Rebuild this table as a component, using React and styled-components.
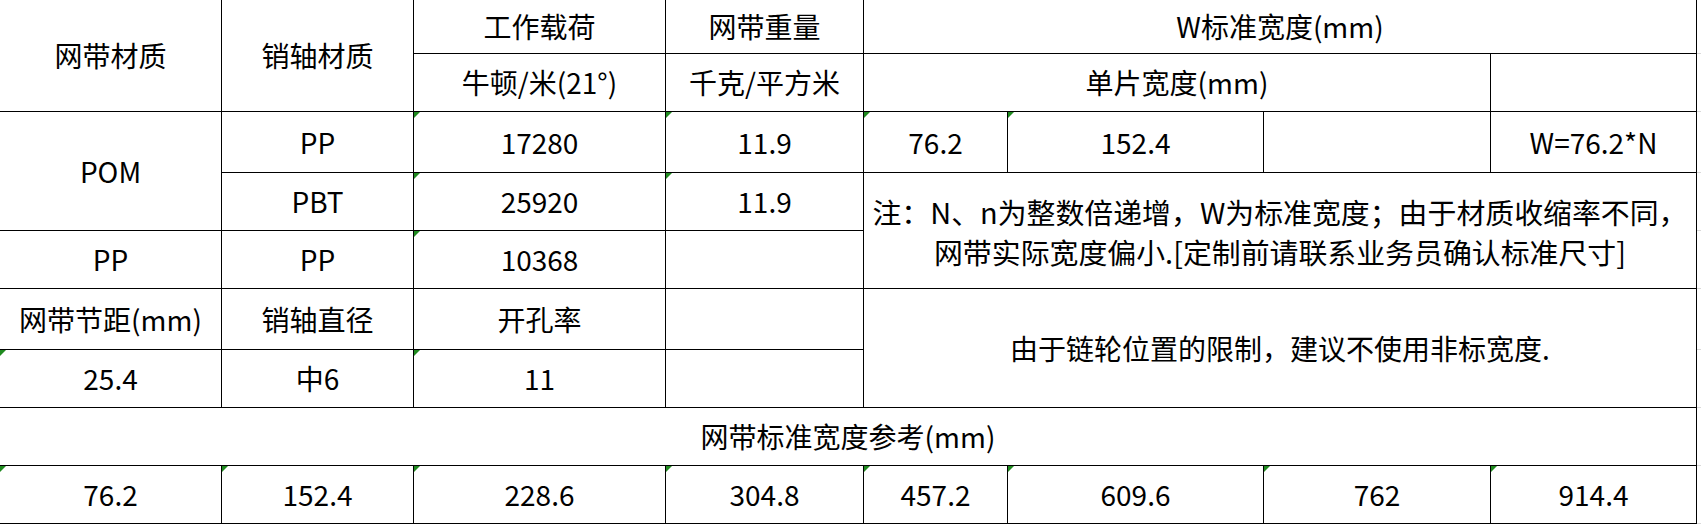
import React from "react";
import styled, { createGlobalStyle } from "styled-components";

const Global = createGlobalStyle`
  html, body { margin: 0; padding: 0; background: #ffffff; }
  body { font-family: "Noto Sans CJK SC", "Noto Sans", sans-serif; }
`;

const Sheet = styled.div`
  display: grid;
  width: 1701px;
  grid-template-columns: 222px 192px 252px 198px 144px 256px 227px 206px 4px;
  grid-template-rows: 54px 58px 61px 58px 58px 61px 58px 58px 58px;
  background: #ffffff;
  color: #000000;
  font-family: "Noto Sans CJK SC", "Noto Sans", sans-serif;
  font-size: 28px;
`;

const Cell = styled.div`
  position: relative;
  box-sizing: border-box;
  grid-column: ${(p) => p.$c} / span ${(p) => p.$cs || 1};
  grid-row: ${(p) => p.$r} / span ${(p) => p.$rs || 1};
  border-right: 1px solid #000000;
  border-bottom: 1px solid #000000;
  display: flex;
  align-items: center;
  justify-content: center;
  text-align: center;
  font-size: ${(p) => (p.$note ? "28.9px" : "28px")};
  line-height: ${(p) => (p.$note ? "40px" : "1.2")};
  white-space: nowrap;
  padding-top: 1px;

  ${(p) =>
    p.$mark &&
    `
    &::before {
      content: "";
      position: absolute;
      top: 0;
      left: 0;
      width: 0;
      height: 0;
      border-top: 6px solid #1f8a1f;
      border-right: 6px solid transparent;
    }
  `}
`;

const Gutter = styled.div`
  box-sizing: border-box;
  grid-column: 9;
  grid-row: ${(p) => p.$r};
  border-bottom: 1px solid #d9d9d9;
`;

const cells = [
  { c: 1, r: 1, rs: 2, t: "网带材质" },
  { c: 2, r: 1, rs: 2, t: "销轴材质" },
  { c: 3, r: 1, t: "工作载荷" },
  { c: 4, r: 1, t: "网带重量" },
  { c: 5, r: 1, cs: 4, t: "W标准宽度(mm)" },
  { c: 3, r: 2, t: "牛顿/米(21°)" },
  { c: 4, r: 2, t: "千克/平方米" },
  { c: 5, r: 2, cs: 3, t: "单片宽度(mm)" },
  { c: 8, r: 2, t: "" },
  { c: 1, r: 3, rs: 2, t: "POM" },
  { c: 2, r: 3, t: "PP" },
  { c: 3, r: 3, t: "17280", m: true },
  { c: 4, r: 3, t: "11.9", m: true },
  { c: 5, r: 3, t: "76.2", m: true },
  { c: 6, r: 3, t: "152.4", m: true },
  { c: 7, r: 3, t: "" },
  { c: 8, r: 3, t: "W=76.2*N" },
  { c: 2, r: 4, t: "PBT" },
  { c: 3, r: 4, t: "25920", m: true },
  { c: 4, r: 4, t: "11.9", m: true },
  {
    c: 5,
    r: 4,
    cs: 4,
    rs: 2,
    note: true,
    t: (
      <>
        注：N、n为整数倍递增，W为标准宽度；由于材质收缩率不同，
        <br />
        网带实际宽度偏小.[定制前请联系业务员确认标准尺寸]
      </>
    ),
  },
  { c: 1, r: 5, t: "PP" },
  { c: 2, r: 5, t: "PP" },
  { c: 3, r: 5, t: "10368", m: true },
  { c: 4, r: 5, t: "" },
  { c: 1, r: 6, t: "网带节距(mm)" },
  { c: 2, r: 6, t: "销轴直径" },
  { c: 3, r: 6, t: "开孔率" },
  { c: 4, r: 6, t: "" },
  { c: 5, r: 6, cs: 4, rs: 2, t: "由于链轮位置的限制，建议不使用非标宽度." },
  { c: 1, r: 7, t: "25.4", m: true },
  { c: 2, r: 7, t: "中6" },
  { c: 3, r: 7, t: "11", m: true },
  { c: 4, r: 7, t: "" },
  { c: 1, r: 8, cs: 8, t: "网带标准宽度参考(mm)" },
  ...["76.2", "152.4", "228.6", "304.8", "457.2", "609.6", "762", "914.4"].map(
    (t, i) => ({ c: i + 1, r: 9, t, m: true })
  ),
];

export default function App() {
  return (
    <>
      <Global />
      <Sheet>
        {cells.map((cell, i) => (
          <Cell
            key={i}
            $c={cell.c}
            $r={cell.r}
            $cs={cell.cs}
            $rs={cell.rs}
            $mark={cell.m}
            $note={cell.note}
          >
            {cell.note ? <div>{cell.t}</div> : cell.t}
          </Cell>
        ))}
        {Array.from({ length: 9 }, (_, i) => (
          <Gutter key={`g${i}`} $r={i + 1} />
        ))}
      </Sheet>
    </>
  );
}
